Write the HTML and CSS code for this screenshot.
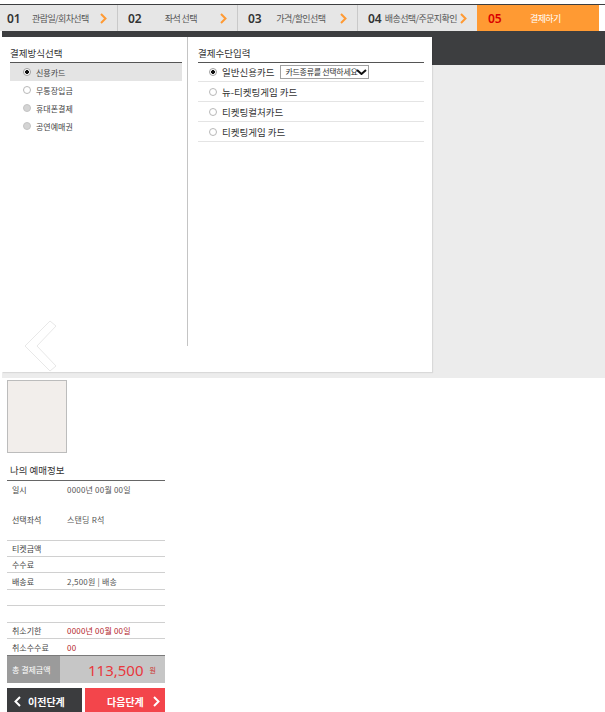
FILE: index.html
```
<!DOCTYPE html>
<html>
<head lang="ko">
    <meta charset="UTF-8">
    <title>결제하기</title>

    <link rel="stylesheet" href="styles.css">
</head>
<body>

<ol class="steps">
    <li><b>01</b><span>관람일/회차선택</span><svg class="arr" viewBox="0 0 7 11"><polyline points="1,1 5.5,5.5 1,10"/></svg></li>
    <li><b>02</b><span>좌석 선택</span><svg class="arr" viewBox="0 0 7 11"><polyline points="1,1 5.5,5.5 1,10"/></svg></li>
    <li><b>03</b><span>가격/할인선택</span><svg class="arr" viewBox="0 0 7 11"><polyline points="1,1 5.5,5.5 1,10"/></svg></li>
    <li><b>04</b><span>배송선택/주문지확인</span><svg class="arr" viewBox="0 0 7 11"><polyline points="1,1 5.5,5.5 1,10"/></svg></li>
    <li class="on"><b>05</b><span>결제하기</span></li>
</ol>

<div class="stage">
    <div class="panel">
        <div class="method">
            <h3>결제방식선택</h3>
            <ul class="opts">
                <li class="sel"><i class="radio on"></i>신용카드</li>
                <li><i class="radio"></i>무통장입금</li>
                <li><i class="radio off"></i>휴대폰결제</li>
                <li><i class="radio off"></i>공연예매권</li>
            </ul>
        </div>
        <div class="means">
            <h3>결제수단입력</h3>
            <ul class="cards">
                <li><i class="radio on"></i>일반신용카드
                    <span class="select">카드종류를 선택하세요<svg viewBox="0 0 11 6"><polyline points="1,1 5.5,5 10,1"/></svg></span>
                </li>
                <li><i class="radio"></i>뉴-티켓팅게임 카드</li>
                <li><i class="radio"></i>티켓팅컬처카드</li>
                <li><i class="radio"></i>티켓팅게임 카드</li>
            </ul>
        </div>
        <!-- carousel arrow, sits over the panel -->
        <svg class="back" viewBox="0 0 36 54">
            <polygon points="28,2 34,7 15,27 34,47 28,52 3,27"/>
        </svg>
    </div>
</div>

<div class="summary">
    <div class="poster"></div>
    <h3>나의 예매정보</h3>
    <div class="rows">
        <div class="row first"><em>일시</em><span>0000년 00월 00일</span></div>
        <div class="row tall"><em>선택좌석</em><span>스탠딩 R석</span></div>
        <div class="row"><em>티켓금액</em><span></span></div>
        <div class="row"><em>수수료</em><span></span></div>
        <div class="row x"><em>배송료</em><span>2,500원 | 배송</span></div>
        <div class="row"></div>
        <div class="row x"></div>
        <div class="row"><em>취소기한</em><span class="red">0000년 00월 00일</span></div>
        <div class="row last"><em>취소수수료</em><span class="red">00</span></div>
    </div>
    <div class="total">
        <div class="label">총 결제금액</div>
        <div class="amount"><strong>113,500</strong><small>원</small></div>
    </div>
    <div class="nav">
        <button class="prev"><svg viewBox="0 0 7 11"><polyline points="6,1 1.5,5.5 6,10"/></svg>이전단계</button>
        <button class="next">다음단계<svg viewBox="0 0 7 11"><polyline points="1,1 5.5,5.5 1,10"/></svg></button>
    </div>
</div>

</body>
</html>
```

FILE: styles.css
```
body {
    margin: 0;
    padding-top: 4px;
    font-family: "Noto Sans CJK KR", "Noto Sans", sans-serif;
    color: #333;
}

h3 {
    margin: 0;
    font-weight: normal;
}

ul {
    list-style: none;
    margin: 0;
    padding: 0;
}

/* steps */
.steps {
    list-style: none;
    margin: 0;
    padding: 0;
    height: 26px;
    display: grid;
    grid-template-columns: 117px 120px 120px 120px 122px;
    border-top: 1px solid #3d3e40;
}

.steps li {
    display: flex;
    align-items: center;
    padding: 0 10px;
    background: #e6e6e6;
}

.steps li:first-child {
    padding-left: 7px;
}

.steps li + li {
    border-left: 1px solid #c9c9c9;
}

.steps b {
    font-family: "Noto Sans", sans-serif;
    font-size: 12px;
    font-weight: 600;
    color: #333;
}

.steps span {
    flex: 1;
    text-align: center;
    font-size: 9px;
    color: #555;
    letter-spacing: -0.6px;
    white-space: nowrap;
}

.steps .arr {
    width: 7px;
    height: 11px;
    fill: none;
    stroke: #ff9a33;
    stroke-width: 2;
}

.steps li.on {
    background: #ff9a33;
    border-left-color: #ff9a33;
}

.steps li.on b {
    color: #d90000;
}

.steps li.on span {
    color: #fff;
}

/* payment panel */
.stage {
    margin-left: 2px;
    padding: 6px 0;
    background: linear-gradient(#3d3e40 0 34px, #ececec 34px);
}

.panel {
    position: relative;
    width: 430px;
    height: 335px;
    display: flex;
    background: #fff;
    box-shadow: 1px 1px 1px rgba(0, 0, 0, 0.08);
}

.panel h3 {
    font-size: 9.5px;
    line-height: 13px;
    padding: 10px 0 2px;
    border-bottom: 1px solid #555;
}

.method {
    width: 172px;
    height: 309px;
    margin-left: 8px;
    padding-right: 5px;
    border-right: 1px solid #c4c4c4;
}

.opts li {
    height: 18px;
    display: flex;
    align-items: center;
    gap: 5px;
    padding-left: 13px;
    font-size: 8px;
    color: #444;
}

.opts li.sel {
    background: #e4e4e4;
}

.radio {
    width: 8px;
    height: 8px;
    box-sizing: border-box;
    border-radius: 50%;
    border: 1px solid #b8b8b8;
    background: #fff;
    flex: none;
}

.radio.on {
    border-color: #a0a0a0;
    background: radial-gradient(circle, #111 0 1.6px, #fff 2.2px);
}

.radio.off {
    border-color: #c4c4c4;
    background: #d4d4d4;
}

.means {
    width: 226px;
    margin-left: 10px;
}

.cards li {
    height: 20px;
    box-sizing: border-box;
    display: flex;
    align-items: center;
    gap: 5px;
    padding-left: 11px;
    border-bottom: 1px solid #e4e4e4;
    font-size: 9.5px;
    color: #333;
}

.cards li:first-child {
    height: 19px;
}

.select {
    position: relative;
    width: 89px;
    height: 14px;
    box-sizing: border-box;
    margin-left: 1px;
    padding-left: 4px;
    border: 1px solid #a0a0a0;
    font-size: 8px;
    line-height: 12px;
    letter-spacing: -0.3px;
    white-space: nowrap;
}

/* dropdown mark drawn over the end of the text */
.select svg {
    position: absolute;
    right: 1px;
    top: 3px;
    width: 11px;
    height: 6px;
    fill: none;
    stroke: #111;
    stroke-width: 2;
}

.back {
    position: absolute;
    left: 20px;
    top: 282px;
    width: 36px;
    height: 54px;
    fill: #fff;
    stroke: #e8e8e8;
    stroke-width: 1;
}

/* booking summary */
.summary {
    width: 158px;
    margin-left: 7px;
}

.poster {
    width: 60px;
    height: 73px;
    margin-top: 2px;
    box-sizing: border-box;
    border: 1px solid #bcbcbc;
    background: #f2eeeb;
}

.summary h3 {
    font-size: 9.5px;
    line-height: 13px;
    padding: 11px 0 3px 3px;
    border-bottom: 1px solid #666;
}

.row {
    display: flex;
    align-items: center;
    height: 16px;
    box-sizing: border-box;
    border-bottom: 1px solid #d0d0d0;
    font-size: 8px;
}

.row.first {
    height: 17px;
    border-bottom: 0;
}

.row.tall {
    height: 43px;
}

.row.x {
    height: 17px;
}

.row.last {
    border-bottom: 0;
}

.row em {
    width: 55px;
    padding-left: 5px;
    font-style: normal;
    color: #444;
}

.row span {
    color: #555;
    letter-spacing: 0.2px;
}

.row span.red {
    color: #b3262b;
}

.total {
    display: flex;
    height: 28px;
    box-sizing: border-box;
    border-top: 1px solid #7a7a7a;
}

.total .label {
    width: 48px;
    padding-left: 5px;
    background: #9b9b9b;
    color: #fff;
    font-size: 8px;
    line-height: 27px;
}

.total .amount {
    flex: 1;
    display: flex;
    align-items: center;
    justify-content: flex-end;
    padding-right: 9px;
    background: #c6c6c6;
}

.total strong {
    font-family: "Noto Sans", sans-serif;
    font-weight: normal;
    font-size: 15px;
    color: #e8383d;
}

.total small {
    margin-left: 6px;
    font-size: 7px;
    color: #c33;
}

.nav {
    display: flex;
    gap: 3px;
    margin-top: 5px;
}

.nav button {
    height: 26px;
    border: 0;
    padding: 0;
    display: flex;
    align-items: center;
    color: #fff;
    font-family: "Noto Sans CJK KR", sans-serif;
    font-size: 10px;
    font-weight: bold;
}

.nav svg {
    width: 7px;
    height: 11px;
    fill: none;
    stroke: #fff;
    stroke-width: 2;
}

.nav .prev {
    width: 75px;
    padding-left: 7px;
    gap: 7px;
    background: #3b3c3e;
}

.nav .next {
    width: 80px;
    padding-left: 22px;
    gap: 9px;
    background: #f3454b;
}
```
